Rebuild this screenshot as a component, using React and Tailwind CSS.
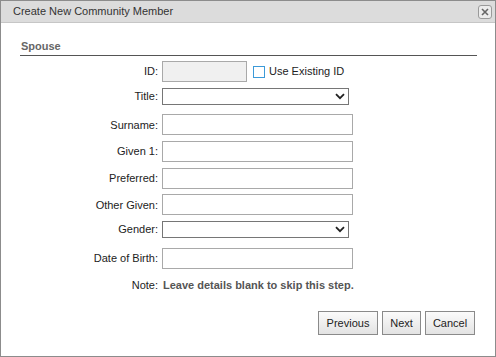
import React from "react";

const Field = ({ label, children, short }) => (
  <div className="flex h-[21px]">
    <div
      className={`w-[138px] flex items-center justify-end text-[11px] text-[#222] ${
        short ? "h-[17px]" : "h-[21px]"
      }`}
    >
      {label}
    </div>
    <div className="ml-[4px] flex items-start">{children}</div>
  </div>
);

const TextBox = ({ width = "w-[191px]", grey }) => (
  <input
    type="text"
    className={`${width} h-[21px] border border-[#a9a9a9] outline-none px-1 text-[11px] ${
      grey ? "bg-[#f0f0f0]" : "bg-white"
    }`}
  />
);

const Select = () => (
  <div className="relative w-[187px] h-[17px]">
    <select className="block appearance-none w-full h-full border border-[#767676] bg-white outline-none text-[11px]">
      <option></option>
    </select>
    <svg
      className="absolute right-[4px] top-[5px] pointer-events-none"
      width="10"
      height="7"
      viewBox="0 0 10 7"
    >
      <path d="M1 1.2 L5 5.2 L9 1.2" fill="none" stroke="#222" strokeWidth="1.8" />
    </svg>
  </div>
);

const Button = ({ children, width }) => (
  <button
    className={`${width} h-[24px] border border-[#8a8a8a] bg-gradient-to-b from-[#fbfbfb] to-[#e3e3e3] text-[11px] text-[#222]`}
  >
    {children}
  </button>
);

const App = () => {
  return (
    <div
      className="w-[496px] h-[357px] border border-[#8c8c8c] bg-white flex flex-col"
      style={{ fontFamily: '"Liberation Sans", Arial, sans-serif' }}
    >
      {/* title bar */}
      <div className="h-[22px] shrink-0 bg-[#dcdcdc] border-b border-[#c6c6c6] flex items-center justify-between pl-[12px] pr-[3px]">
        <span className="text-[11px] text-[#333]">Create New Community Member</span>
        <button className="w-[14px] h-[14px] rounded-[3px] border border-[#9a9a9a] bg-[#ececec] flex items-center justify-center">
          <svg width="8" height="8" viewBox="0 0 8 8">
            <path d="M1 1 L7 7 M7 1 L1 7" stroke="#666" strokeWidth="1.6" />
          </svg>
        </button>
      </div>

      <div className="pl-[19px] pr-[18px] flex flex-col">
        <div className="pt-[17px] pb-[2px] border-b border-[#555]">
          <div className="text-[11px] leading-[13px] font-bold text-[#666] pl-[1px]">Spouse</div>
        </div>

        <div className="mt-[5px] flex flex-col gap-[5.7px]">
          <Field label="ID:">
            <div className="flex items-center h-[21px]">
              <TextBox width="w-[85px]" grey />
              <span className="ml-[6px] w-[12px] h-[12px] border border-[#3c9ad8] bg-white" />
              <span className="ml-[4px] text-[11px] text-[#222]">Use Existing ID</span>
            </div>
          </Field>
          <Field label="Title:" short>
            <Select />
          </Field>
          <Field label="Surname:">
            <TextBox />
          </Field>
          <Field label="Given 1:">
            <TextBox />
          </Field>
          <Field label="Preferred:">
            <TextBox />
          </Field>
          <Field label="Other Given:">
            <TextBox />
          </Field>
          <Field label="Gender:" short>
            <Select />
          </Field>
          <Field label="Date of Birth:">
            <TextBox />
          </Field>
        </div>

        <div className="mt-[10px] flex h-[13px] items-center">
          <div className="w-[138px] text-right text-[11px] text-[#222]">Note:</div>
          <div className="ml-[5px] text-[11px] font-bold text-[#555]">
            Leave details blank to skip this step.
          </div>
        </div>

        <div className="mt-[19px] mr-[2px] flex justify-end gap-[4px]">
          <Button width="w-[60px]">Previous</Button>
          <Button width="w-[39px]">Next</Button>
          <Button width="w-[50px]">Cancel</Button>
        </div>
      </div>
    </div>
  );
};

export default App;
